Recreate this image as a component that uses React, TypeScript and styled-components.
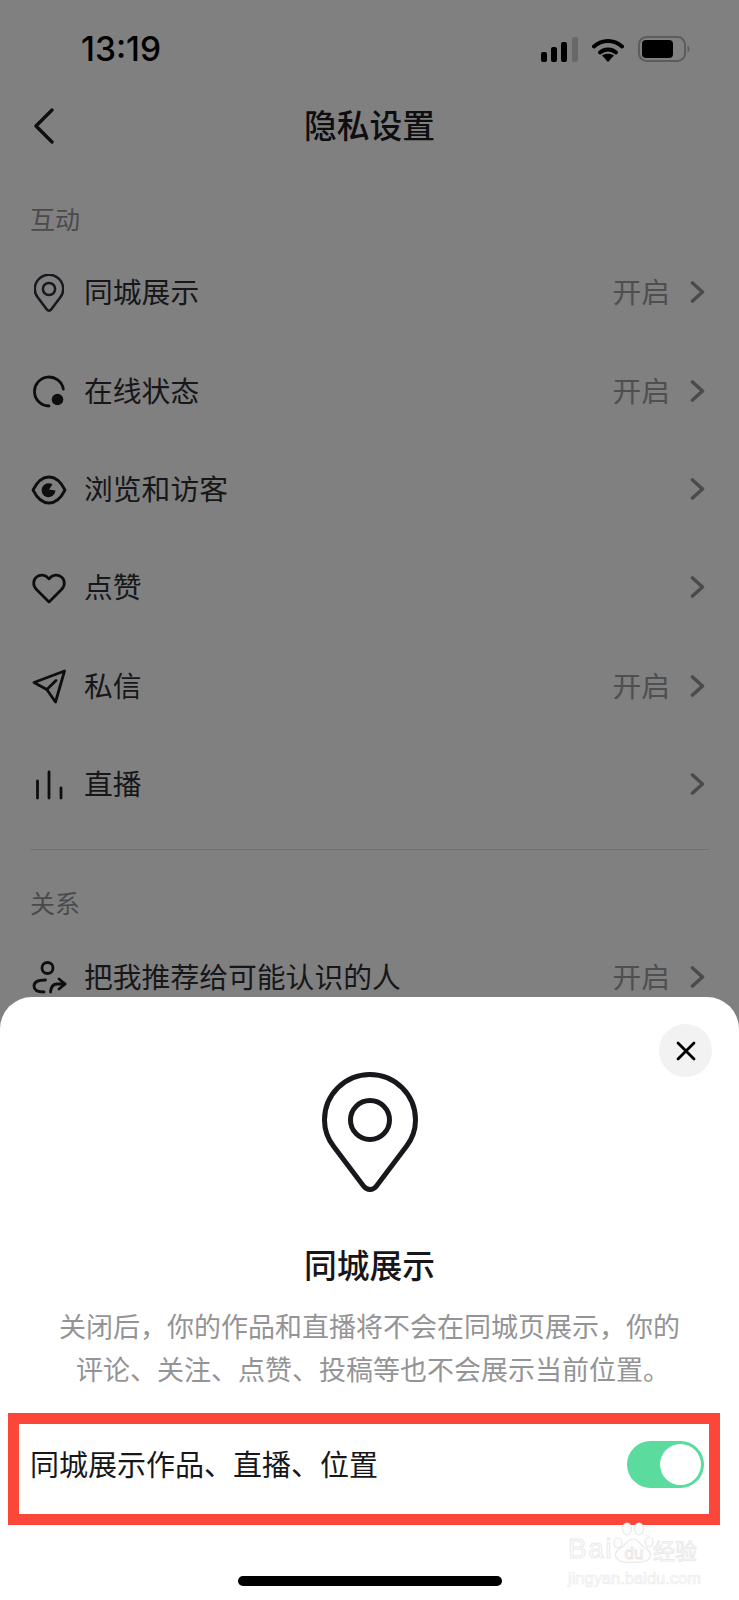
import React from 'react';
import styled, { createGlobalStyle } from 'styled-components';

const GlobalStyle = createGlobalStyle`
  html, body {
    margin: 0;
    padding: 0;
    background: #808080;
  }
  * {
    box-sizing: border-box;
  }
`;

const Page = styled.div`
  position: relative;
  width: 739px;
  height: 1600px;
  overflow: hidden;
  background: #808080;
  color: #0e0e10;
  font-family: 'Noto Sans CJK SC', 'Liberation Sans', sans-serif;
`;

const StatusBar = styled.div`
  display: flex;
  align-items: center;
  justify-content: space-between;
  height: 98px;
  padding: 0 49px 0 81px;
`;

const Clock = styled.span`
  font-family: Inter, 'Liberation Sans', sans-serif;
  font-size: 33.5px;
  font-weight: 500;
  line-height: 36px;
  color: #000;
`;

const StatusIcons = styled.div`
  display: flex;
  align-items: center;
  gap: 14px;
`;

const NavBar = styled.div`
  position: relative;
  display: flex;
  align-items: center;
  justify-content: center;
  height: 56px;
`;

const BackButton = styled.div`
  position: absolute;
  left: 33px;
  top: 10px;
  display: flex;
`;

const NavTitle = styled.h1`
  margin: 0 0 4px;
  font-size: 32.8px;
  font-weight: 500;
  line-height: 44px;
  color: #0e0e10;
`;

const SectionLabel = styled.div`
  margin: 0 30px 9px;
  font-size: 25px;
  line-height: 34px;
  color: #4a4a4c;
`;

const InteractLabel = styled(SectionLabel)`
  margin-top: 47px;
`;

const RelationLabel = styled(SectionLabel)`
  margin-top: 35px;
`;

const Row = styled.div`
  display: flex;
  align-items: center;
  height: 98.4px;
  padding: 0 34px 0 31px;
`;

const RowIcon = styled.div`
  display: flex;
  align-items: center;
  justify-content: center;
  width: 36px;
  margin-right: 17px;
`;

const RowLabel = styled.span`
  flex: 1;
  margin-bottom: 4px;
  font-size: 28.8px;
  line-height: 40px;
  color: #17171a;
`;

const RowValue = styled.span`
  margin: 0 20px 4px 0;
  font-size: 28.8px;
  line-height: 40px;
  color: #4f4f50;
`;

const ChevronSlot = styled.div`
  display: flex;
  margin-bottom: 2px;
`;

const Divider = styled.div`
  height: 1px;
  margin: 15px 30px 0;
  background: #707070;
`;

const Sheet = styled.div`
  position: absolute;
  left: 0;
  right: 0;
  bottom: 0;
  display: flex;
  flex-direction: column;
  align-items: center;
  height: 603px;
  padding-top: 75px;
  background: #fff;
  border-radius: 32px 32px 0 0;
`;

const CloseButton = styled.div`
  position: absolute;
  top: 27px;
  right: 27px;
  display: flex;
  align-items: center;
  justify-content: center;
  width: 53px;
  height: 53px;
  border-radius: 50%;
  background: #f2f2f2;
`;

const SheetTitle = styled.h2`
  margin: 49px 0 0;
  font-size: 32.8px;
  font-weight: 500;
  line-height: 44px;
  color: #16161a;
`;

const SheetText = styled.p`
  margin: 18px 0 0;
  width: 660px;
  font-size: 27px;
  line-height: 43px;
  text-align: center;
  color: #949496;
`;

const SheetTextShifted = styled.span`
  display: inline-block;
  padding-left: 7px;
`;

const Highlight = styled.div`
  display: flex;
  align-items: center;
  justify-content: space-between;
  align-self: flex-start;
  width: 712px;
  height: 112px;
  margin: 23px 0 0 8px;
  padding: 0 5px 0 11px;
  border: 11px solid #fc4639;
`;

const HighlightLabel = styled.span`
  margin-bottom: 12px;
  font-size: 29px;
  line-height: 40px;
  color: #17171a;
`;

const Toggle = styled.div`
  display: flex;
  align-items: center;
  justify-content: flex-end;
  width: 77px;
  height: 47px;
  margin-bottom: 10px;
  padding-right: 3px;
  border-radius: 24px;
  background: #5bdb9d;
`;

const ToggleKnob = styled.div`
  width: 41px;
  height: 41px;
  border-radius: 50%;
  background: #fff;
`;

const HomeBar = styled.div`
  width: 264px;
  height: 10px;
  margin-top: 51px;
  border-radius: 5px;
  background: #000;
`;

const Watermark = styled.div`
  position: absolute;
  left: 568px;
  top: 1522px;
  display: flex;
  flex-direction: column;
  width: 134px;
  color: #fdfdfd;
  font-family: 'Liberation Sans', 'Noto Sans CJK SC', sans-serif;
  -webkit-text-stroke: 1px #ebebeb;
`;

const WatermarkBrand = styled.div`
  display: flex;
  align-items: flex-end;
  height: 42px;
`;

const WatermarkLatin = styled.span`
  width: 44px;
  font-size: 28px;
  line-height: 30px;
  letter-spacing: 1.5px;
`;

const WatermarkCn = styled.span`
  margin-left: -3px;
  font-size: 22px;
  line-height: 30px;
  font-family: 'Noto Sans CJK SC', sans-serif;
`;

const WatermarkUrl = styled.div`
  margin-top: 4px;
  font-size: 16.5px;
  line-height: 20px;
  -webkit-text-stroke: 0.6px #ebebeb;
`;

const stroke = {
  fill: 'none',
  stroke: '#0e0e10',
  strokeLinecap: 'round',
  strokeLinejoin: 'round',
} as const;

const Chevron = () => (
  <ChevronSlot>
    <svg width="15" height="22" viewBox="0 0 15 22">
      <path d="M2.5 2l10 9-10 9" fill="none" stroke="#4b4b4c" strokeWidth="3.6" strokeLinecap="round" strokeLinejoin="round" />
    </svg>
  </ChevronSlot>
);

const PIN_PATH =
  'M48 2.5C22.9 2.5 2.5 22.9 2.5 48c0 10 3.4 19 9.2 26.6l30 39.7c3.2 4.2 9.4 4.2 12.6 0l30-39.7C90.1 67 93.5 58 93.5 48 93.5 22.9 73.1 2.5 48 2.5Z';

const PinIcon = ({ width, weight }: { width: number; weight: number }) => (
  <svg width={width} height={(width * 121) / 96} viewBox="0 0 96 121">
    <path d={PIN_PATH} {...stroke} stroke="#17171c" strokeWidth={weight} />
    <circle cx="48" cy="48" r="19.5" {...stroke} stroke="#17171c" strokeWidth={weight} />
  </svg>
);

const OnlineIcon = () => (
  <svg width="32" height="33" viewBox="0 0 32 33">
    <path d="M16 31A14.5 14.5 0 1 1 30.3 14" {...stroke} strokeWidth="2.8" />
    <circle cx="24.5" cy="24.5" r="5.8" fill="#0e0e10" />
  </svg>
);

const EyeIcon = () => (
  <svg width="36" height="30" viewBox="0 0 36 30">
    <path d="M2 15C6 7 11 2 18 2s12 5 16 13c-4 8-9 13-16 13S6 23 2 15Z" {...stroke} strokeWidth="2.8" />
    <path d="M18 14.5 21.5 9.5A7 7 0 1 0 24.5 15.5Z" fill="#0e0e10" />
  </svg>
);

const HeartIcon = () => (
  <svg width="34" height="31" viewBox="0 0 34 31">
    <path d="M17 29 4.5 16.5C.5 12.5 1 7 4.5 4c3.8-3 9-2.5 12.5 1.8C20.5 1.5 25.7 1 29.5 4c3.5 3 4 8.5 0 12.5Z" {...stroke} strokeWidth="2.8" />
  </svg>
);

const SendIcon = () => (
  <svg width="35" height="35" viewBox="0 0 35 35">
    <path d="M2 13.5 32.5 2 23.5 33 14.8 20.5Z" {...stroke} strokeWidth="2.8" />
    <path d="M14.8 20.5 24 11.5" {...stroke} strokeWidth="2.8" />
  </svg>
);

const LiveIcon = () => (
  <svg width="28" height="30" viewBox="0 0 28 30">
    <path d="M2.5 11v17M14 2v26M26 18v10" {...stroke} strokeWidth="2.8" />
  </svg>
);

const FriendIcon = () => (
  <svg width="35" height="34" viewBox="0 0 35 34">
    <circle cx="15.5" cy="7" r="5.5" {...stroke} strokeWidth="2.8" />
    <path d="M13.5 19C6 19 2 21 2 25c0 4 4 6 10 6" {...stroke} strokeWidth="2.8" />
    <path d="M18.5 31c.5-5 2.5-8 6.5-8h8" {...stroke} strokeWidth="2.8" />
    <path d="M27 18l6 5-6 5" {...stroke} strokeWidth="2.8" />
  </svg>
);

const StatusGlyphs = () => (
  <StatusIcons>
    <svg width="37" height="25" viewBox="0 0 37 25">
      <rect x="0" y="15" width="6" height="10" rx="2" fill="#000" />
      <rect x="10" y="10" width="6" height="15" rx="2" fill="#000" />
      <rect x="20" y="5" width="6" height="20" rx="2" fill="#000" />
      <rect x="31" y="0" width="6" height="25" rx="2" fill="#686868" />
    </svg>
    <svg width="32" height="25" viewBox="0 0 32 25">
      <path d="M2 9.5c8-7.5 20-7.5 28 0" fill="none" stroke="#000" strokeWidth="4" strokeLinecap="round" />
      <path d="M8 15.5c4.6-4 11.4-4 16 0" fill="none" stroke="#000" strokeWidth="4" strokeLinecap="round" />
      <path d="M16 25l-6-6.5c3.4-2.3 8.6-2.3 12 0Z" fill="#000" />
    </svg>
    <svg width="52" height="26" viewBox="0 0 52 26">
      <rect x="1" y="1" width="46" height="24" rx="7.5" fill="none" stroke="#5c5c5c" strokeWidth="2" />
      <rect x="4" y="4" width="31" height="18" rx="4" fill="#000" />
      <path d="M49.5 9.5c1.5.8 2 2 2 3.5s-.5 2.7-2 3.5Z" fill="#5c5c5c" />
    </svg>
  </StatusIcons>
);

const BaiduPaw = () => (
  <svg width="44" height="42" viewBox="0 0 44 42">
    <g fill="#fdfdfd" stroke="#e8e8e8" strokeWidth="1.2">
      <ellipse cx="6" cy="21" rx="4" ry="5" />
      <ellipse cx="15" cy="7" rx="4.5" ry="6" />
      <ellipse cx="27" cy="7" rx="4.5" ry="6" />
      <ellipse cx="37" cy="20" rx="4" ry="5" />
      <path d="M21 17c-5 0-7 5-11 8-5 3-8 6-6 10 2 5 8 6 17 5 9 1 15 0 17-5 2-4-1-7-6-10-4-3-6-8-11-8Z" />
    </g>
    <text x="22" y="37" textAnchor="middle" fontSize="17" fontFamily="'Liberation Sans', sans-serif" fill="#fdfdfd" stroke="#e6e6e6" strokeWidth="0.8">
      du
    </text>
  </svg>
);

const rows = [
  { label: '同城展示', value: '开启', icon: <PinIcon width={30} weight={8} /> },
  { label: '在线状态', value: '开启', icon: <OnlineIcon /> },
  { label: '浏览和访客', icon: <EyeIcon /> },
  { label: '点赞', icon: <HeartIcon /> },
  { label: '私信', value: '开启', icon: <SendIcon /> },
  { label: '直播', icon: <LiveIcon /> },
];

const SettingRow = ({ label, value, icon }: { label: string; value?: string; icon: React.ReactNode }) => (
  <Row>
    <RowIcon>{icon}</RowIcon>
    <RowLabel>{label}</RowLabel>
    {value && <RowValue>{value}</RowValue>}
    <Chevron />
  </Row>
);

const sheetLineOne = '关闭后\uFF0C你的作品和直播将不会在同城页展示\uFF0C你的';
const sheetLineTwo = '评论、关注、点赞、投稿等也不会展示当前位置。';

const App: React.FC = () => (
  <Page>
    <GlobalStyle />
    <StatusBar>
      <Clock>13:19</Clock>
      <StatusGlyphs />
    </StatusBar>
    <NavBar>
      <BackButton>
        <svg width="22" height="36" viewBox="0 0 22 36">
          <path d="M19 2 3 18l16 16" fill="none" stroke="#0e0e10" strokeWidth="3.4" strokeLinecap="round" strokeLinejoin="round" />
        </svg>
      </BackButton>
      <NavTitle>隐私设置</NavTitle>
    </NavBar>
    <InteractLabel>互动</InteractLabel>
    {rows.map((row) => (
      <SettingRow key={row.label} {...row} />
    ))}
    <Divider />
    <RelationLabel>关系</RelationLabel>
    <SettingRow label="把我推荐给可能认识的人" value="开启" icon={<FriendIcon />} />

    <Sheet>
      <CloseButton>
        <svg width="20" height="20" viewBox="0 0 20 20">
          <path d="M2 2l16 16M18 2 2 18" fill="none" stroke="#000" strokeWidth="2.8" strokeLinecap="round" />
        </svg>
      </CloseButton>
      <PinIcon width={96} weight={5} />
      <SheetTitle>同城展示</SheetTitle>
      <SheetText>
        {sheetLineOne}
        <br />
        <SheetTextShifted>{sheetLineTwo}</SheetTextShifted>
      </SheetText>
      <Highlight>
        <HighlightLabel>同城展示作品、直播、位置</HighlightLabel>
        <Toggle>
          <ToggleKnob />
        </Toggle>
      </Highlight>
      <HomeBar />
    </Sheet>

    <Watermark>
      <WatermarkBrand>
        <WatermarkLatin>Bai</WatermarkLatin>
        <BaiduPaw />
        <WatermarkCn>经验</WatermarkCn>
      </WatermarkBrand>
      <WatermarkUrl>jingyan.baidu.com</WatermarkUrl>
    </Watermark>
  </Page>
);

export default App;
